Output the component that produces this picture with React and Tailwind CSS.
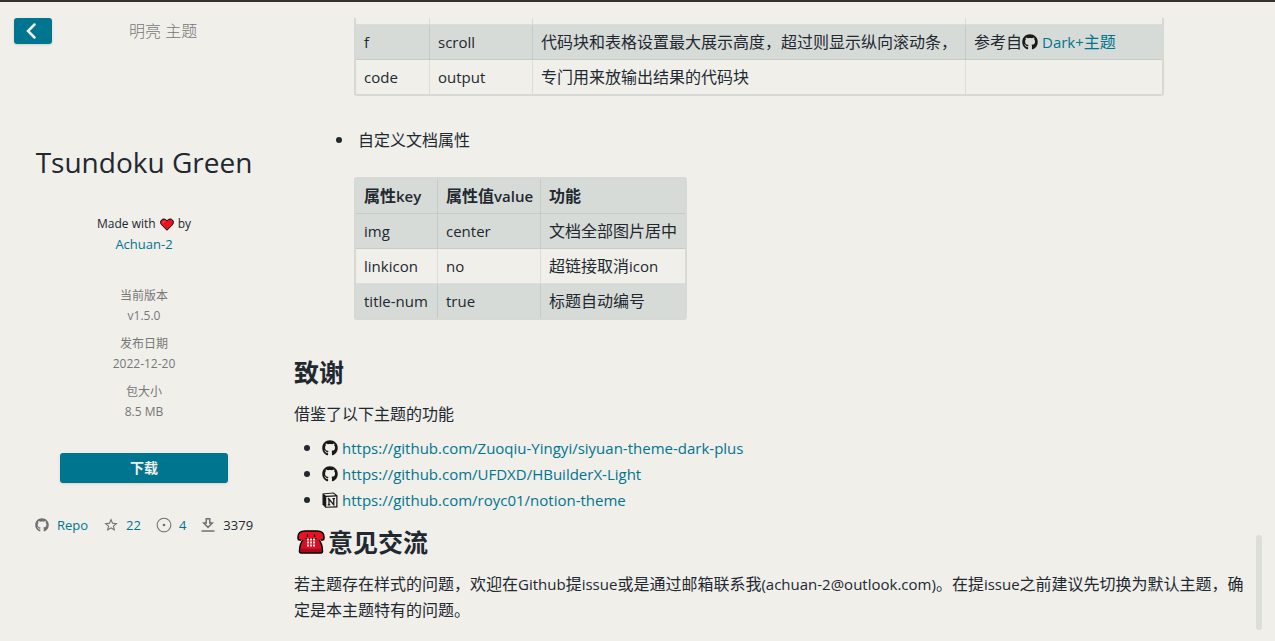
import { FaGithub } from "react-icons/fa";
import { GoIssueOpened } from "react-icons/go";
import { MdStarBorder } from "react-icons/md";

const details = [
  { label: "当前版本", value: "v1.5.0" },
  { label: "发布日期", value: "2022-12-20" },
  { label: "包大小", value: "8.5 MB" },
];

const docAttrs = [
  ["img", "center", "文档全部图片居中"],
  ["linkicon", "no", <>超链接取消<En>icon</En></>],
  ["title-num", "true", "标题自动编号"],
];

const credits = [
  { Icon: FaGithub, url: "https://github.com/Zuoqiu-Yingyi/siyuan-theme-dark-plus" },
  { Icon: FaGithub, url: "https://github.com/UFDXD/HBuilderX-Light" },
  { Icon: Notion, url: "https://github.com/royc01/notion-theme" },
];

// Latin text inside Chinese copy, one step smaller
function En({ children }) {
  return <span className="text-[15px]">{children}</span>;
}

function Heart() {
  return (
    <svg viewBox="0 0 28 26" className="h-[13px] w-[14px]" aria-hidden="true">
      <path
        d="M14 24.5 3.2 13.6C.5 10.8.7 6.3 3.2 3.8 6 1 10.8 1.4 14 5.6 17.2 1.4 22 1 24.8 3.8c2.5 2.5 2.7 7 0 9.8z"
        fill="#e81224"
        stroke="#000"
        strokeWidth="2"
        strokeLinejoin="round"
      />
      <path d="M6 10c0-3 2-4 4-4" fill="none" stroke="#f4674f" strokeWidth="2" strokeLinecap="round" />
    </svg>
  );
}

function Phone() {
  return (
    <svg viewBox="0 0 56 48" className="h-6 w-7" aria-hidden="true">
      <path
        d="M13 16 7 29c-1 3-2 7-2 13 0 2 1 4 3 4h40c2 0 3-2 3-4 0-6-1-10-2-13l-6-13z"
        fill="#d50f25"
        stroke="#000"
        strokeWidth="3"
      />
      <path d="M7 38h42v3c0 2-1 3-2 3H9c-1 0-2-1-2-3z" fill="#a4091c" />
      <path
        d="M2 14C2 6 8 2 16 2h24c8 0 14 4 14 12v3c0 2-1 3-3 3h-6c-3 0-4-2-6-4H17c-2 2-3 4-6 4H5c-2 0-3-1-3-3z"
        fill="#e81224"
      />
      <path
        d="M8 20H5c-2 0-3-1-3-3v-3C2 6 8 2 16 2h24c8 0 14 4 14 12v3c0 2-1 3-3 3h-3"
        fill="none"
        stroke="#000"
        strokeWidth="3"
        strokeLinejoin="round"
      />
      <path d="M21 9v5M35 9v5" stroke="#000" strokeWidth="3" />
      <g fill="#ffe6e2">
        <path d="M20 17h4v4h-4zM26 17h4v4h-4zM32 17h4v4h-4z" />
        <path d="M20 23h4v4h-4zM26 23h4v4h-4zM32 23h4v4h-4z" />
        <path d="M20 29h4v4h-4zM26 29h4v4h-4zM32 29h4v4h-4z" />
      </g>
    </svg>
  );
}

function Notion({ className }) {
  return (
    <svg viewBox="0 0 32 32" className={className} fill="none" aria-hidden="true">
      <path d="M1 3 23 1l8 6v24l-24 .5L1 25z" fill="#191717" />
      <path d="M4 4.500 22 3l5 3.500L8 7.500z" fill="#f0efea" />
      <path d="M8.500 10 28.500 9v19.500l-20 1z" fill="#f0efea" />
      <path d="M14 25.500V14l9.500 11.500V13M11.500 13.500H15M21 13h5M11.500 25.500h5" stroke="#191717" strokeWidth="2.500" />
    </svg>
  );
}

function Downloads({ className }) {
  return (
    <svg viewBox="0 0 14 14" className={className} fill="none" stroke="currentColor" strokeWidth="1.500" aria-hidden="true">
      <path d="M5.250.75h3.500V5h2.500L7 9.500 2.750 5h2.500z" />
      <path d="M.5 13h13" />
    </svg>
  );
}

function Sidebar() {
  return (
    <aside className="flex w-72 shrink-0 flex-col items-center pt-4 text-center">
      <div className="flex w-full items-center pl-[14px]">
        <button
          aria-label="返回"
          className="flex h-[26px] w-[38px] items-center justify-center rounded-[3px] bg-[#00758f] pr-1 text-[#f0efea] shadow-sm"
        >
          <svg viewBox="0 0 10 16" className="h-4 w-[10px]" fill="none" stroke="currentColor" strokeWidth="2.500" strokeLinecap="round">
            <path d="M8.500 1.500 2 8l6.500 6.500" />
          </svg>
        </button>
        <span className="ml-[77px] text-base font-light leading-[26px] text-[#777]">明亮 主题</span>
      </div>

      <h1 className="mt-[98px] text-[28px] leading-10 text-[#222830]">Tsundoku Green</h1>

      <div className="mt-8 flex items-center gap-1 text-xs leading-5">
        Made with <Heart /> by
      </div>
      <a href="#author" className="text-[13px] leading-5 text-[#00758f]">
        Achuan-2
      </a>

      <dl className="mt-8 flex flex-col gap-2 text-xs leading-5 text-[#777]">
        {details.map((item) => (
          <div key={item.label}>
            <dt>{item.label}</dt>
            <dd>{item.value}</dd>
          </div>
        ))}
      </dl>

      <button className="mt-[31px] h-[30px] w-[168px] rounded-[3px] bg-[#00758f] text-sm font-bold text-[#f0efea] shadow-sm">
        下载
      </button>

      <div className="mt-8 flex items-center gap-[15px] text-[13px] leading-5 text-[#00758f]">
        <a href="#repo" className="flex items-center gap-2">
          <FaGithub className="size-[14px] text-[#707070]" />
          Repo
        </a>
        <a href="#stars" className="flex items-center gap-[7px]">
          <MdStarBorder className="size-4 text-[#707070]" />
          22
        </a>
        <a href="#issues" className="flex items-center gap-[7px]">
          <GoIssueOpened className="size-4 text-[#707070]" />4
        </a>
        <span className="flex items-center gap-2 text-[#222830]">
          <Downloads className="size-[14px] text-[#707070]" />
          3379
        </span>
      </div>
    </aside>
  );
}

function Dot() {
  return <span className="size-[6px] shrink-0 rounded-full bg-[#222830]" />;
}

const tableClass =
  "table-fixed border-separate border-spacing-0 rounded-[3px] border-2 border-[#d7d9d4] [&_td]:border-[#334646]/10 [&_td]:px-2 [&_th]:border-[#334646]/10 [&_th]:px-2 [&_td:not(:last-child)]:border-r [&_th:not(:last-child)]:border-r [&_th]:border-b [&_tr:not(:last-child)>td]:border-b";

function Readme() {
  return (
    <main className="min-w-0 flex-1 overflow-hidden pl-[6px] leading-[26px]">
      <div className="pl-[60px]">
        <table className={`${tableClass} w-[810px] rounded-t-none border-t-0`}>
          <colgroup>
            <col className="w-[74px]" />
            <col className="w-[103px]" />
            <col className="w-[433px]" />
            <col />
          </colgroup>
          <tbody className="[&_td]:whitespace-nowrap">
            <tr className="h-[7px]">
              <td />
              <td />
              <td />
              <td />
            </tr>
            <tr className="h-[35px] bg-[#d6dbd7]">
              <td><En>f</En></td>
              <td><En>scroll</En></td>
              <td>代码块和表格设置最大展示高度，超过则显示纵向滚动条，</td>
              <td>
                <div className="flex items-center">
                  参考自
                  <FaGithub className="mr-1 size-4 text-[#191717]" />
                  <a href="#dark-plus" className="text-[#00758f]">
                    <En>Dark+</En>主题
                  </a>
                </div>
              </td>
            </tr>
            <tr className="h-[34px]">
              <td><En>code</En></td>
              <td><En>output</En></td>
              <td>专门用来放输出结果的代码块</td>
              <td />
            </tr>
          </tbody>
        </table>
      </div>

      <div className="mt-[31px] flex items-center gap-4 pl-[42px]">
        <Dot />
        自定义文档属性
      </div>

      <div className="mt-6 pl-[60px]">
        <table className={`${tableClass} w-[333px]`}>
          <colgroup>
            <col className="w-[82px]" />
            <col className="w-[103px]" />
            <col />
          </colgroup>
          <thead>
            <tr className="h-[35px] bg-[#d6dbd7] text-left [&_th]:whitespace-nowrap [&_th]:font-semibold">
              <th>属性<En>key</En></th>
              <th>属性值<En>value</En></th>
              <th>功能</th>
            </tr>
          </thead>
          <tbody className="[&_td]:whitespace-nowrap">
            {docAttrs.map(([key, value, desc]) => (
              <tr key={key} className="h-[35px] last:h-[34px] odd:bg-[#d6dbd7]">
                <td><En>{key}</En></td>
                <td><En>{value}</En></td>
                <td>{desc}</td>
              </tr>
            ))}
          </tbody>
        </table>
      </div>

      <h2 className="mt-9 text-[25px] font-bold leading-8">致谢</h2>
      <p className="mt-[13px]">借鉴了以下主题的功能</p>
      <ul className="mt-2">
        {credits.map(({ Icon, url }) => (
          <li key={url} className="flex items-center pl-[10px]">
            <Dot />
            <Icon className="ml-3 mr-1 size-4 text-[#191717]" />
            <a href={url} className="text-[15px] text-[#00758f]">
              {url}
            </a>
          </li>
        ))}
      </ul>

      <h2 className="mt-[13px] flex items-center gap-[3px] pl-[3px] text-[25px] font-bold leading-8">
        <Phone />
        意见交流
      </h2>
      <p className="mt-[13px]">
        若主题存在样式的问题，欢迎在<En>Github</En>提<En>issue</En>或是通过邮箱联系我
        <En>(achuan-2@outlook.com)</En>。在提<En>issue</En>之前建议先切换为默认主题，确定是本主题特有的问题。
      </p>
    </main>
  );
}

export default function App() {
  return (
    <div
      lang="zh-CN"
      className="flex h-screen overflow-hidden border-t-2 border-[#33302e] bg-[#f0efea] font-['Open_Sans','Noto_Sans_CJK_SC',sans-serif] text-base text-[#222830]"
    >
      <Sidebar />
      <div className="flex min-w-0 flex-1 pt-4 pr-[13px]">
        <Readme />
        <div className="mb-[11px] ml-2 h-[95px] w-[6px] shrink-0 self-end rounded-full bg-[#dcdeda]" />
      </div>
    </div>
  );
}
